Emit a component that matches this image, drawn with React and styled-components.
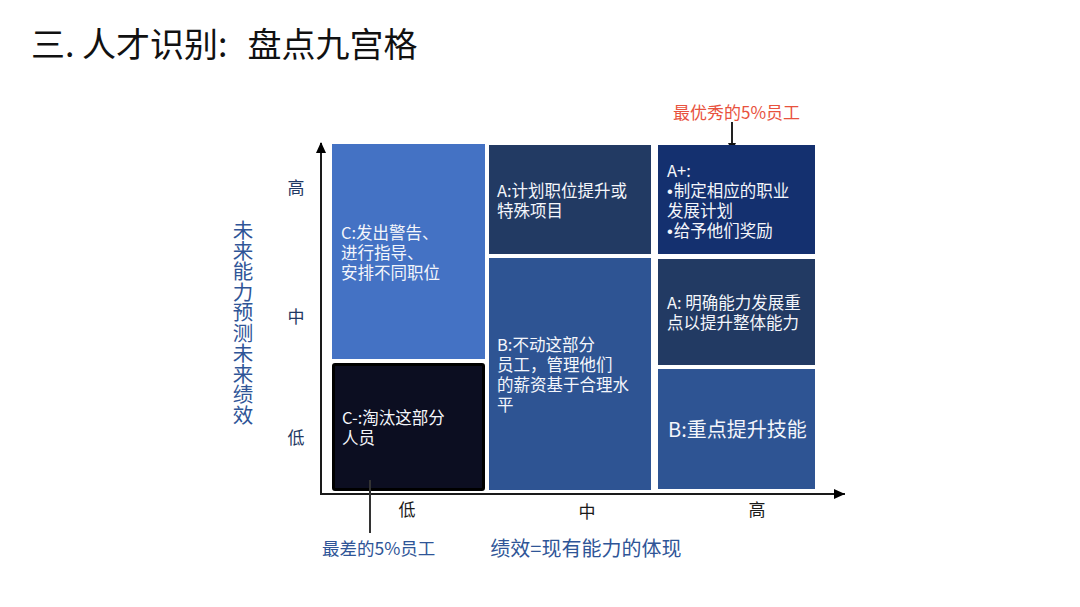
import styled, { createGlobalStyle } from "styled-components";

const GlobalStyle = createGlobalStyle`
  html, body {
    margin: 0;
    padding: 0;
    background: #fff;
  }
`;

const Slide = styled.div`
  width: 1080px;
  height: 607px;
  background: #fff;
  overflow: hidden;
  font-family: "Noto Sans CJK SC", "Noto Sans", sans-serif;
`;

const Title = styled.h1`
  margin: 0;
  padding: 23px 0 0 31px;
  font-size: 34px;
  line-height: 40px;
  font-weight: 400;
  color: #111;
`;

const Colon = styled.span`
  margin-right: 20px;
`;

const NoteRow = styled.div`
  position: relative;
  margin-top: 37px;
  padding-left: 673px;
  height: 24px;
  font-size: 17px;
  line-height: 24px;
  color: #e8523e;
`;

const DownArrow = styled.svg`
  position: absolute;
  left: 54px;
  top: 22px;
  margin-left: 673px;
`;

const ChartArea = styled.div`
  display: flex;
  align-items: flex-start;
  margin-top: 19px;
  padding-left: 232px;
`;

const YTitle = styled.div`
  writing-mode: vertical-rl;
  width: 22px;
  margin-top: 77px;
  font-size: 20.5px;
  line-height: 22px;
  color: #2f5597;
`;

const YTicks = styled.div`
  display: flex;
  flex-direction: column;
  width: 20px;
  margin-left: 32px;
`;

const YTick = styled.span`
  margin-top: ${p => p.$top}px;
  font-size: 17px;
  line-height: 20px;
  text-align: center;
  color: #1f3864;
`;

const PlotColumn = styled.div`
  position: relative;
  display: flex;
  flex-direction: column;
  margin-left: 14px;
`;

const Plot = styled.div`
  position: relative;
  box-sizing: border-box;
  width: 525px;
  height: 352px;
  padding: 1px 0 2px 10px;
  border-left: 2px solid #1a1a1a;
  border-bottom: 2px solid #1a1a1a;

  &::before {
    content: "";
    position: absolute;
    left: -6px;
    top: -1px;
    border-left: 5px solid transparent;
    border-right: 5px solid transparent;
    border-bottom: 11px solid #000;
  }

  &::after {
    content: "";
    position: absolute;
    right: 0;
    bottom: -6px;
    border-top: 5px solid transparent;
    border-bottom: 5px solid transparent;
    border-left: 11px solid #000;
  }
`;

const Grid = styled.div`
  display: flex;
  align-items: flex-start;
`;

const Column = styled.div`
  display: flex;
  flex-direction: column;
  width: ${p => p.$w}px;
  margin-left: ${p => p.$ml || 0}px;
  padding-top: ${p => p.$pt || 0}px;
  gap: ${p => p.$gap}px;
`;

const Cell = styled.div`
  box-sizing: border-box;
  display: flex;
  flex-direction: column;
  justify-content: center;
  height: ${p => p.$h}px;
  margin-top: ${p => p.$mt || 0}px;
  padding: 0 4px 0 ${p => p.$pl || 9}px;
  background: ${p => p.$bg};
  border: ${p => (p.$dark ? "3px solid #000" : "none")};
  border-radius: ${p => (p.$dark ? "3px" : "0")};
  color: #f4f6fb;
  font-size: ${p => p.$fs || 16.5}px;
  line-height: 20px;
  white-space: nowrap;
`;

const Line = styled.span`
  display: block;
  height: 20px;
`;

const Bullet = styled.span`
  font-family: "Liberation Sans", Arial, sans-serif;
  margin-right: 1px;
`;

const Pointer = styled.div`
  position: absolute;
  left: 49px;
  top: 337px;
  width: 2px;
  height: 53px;
  background: #333;
`;

const XTicks = styled.div`
  display: flex;
  margin-top: 4px;
`;

const XTick = styled.span`
  width: ${p => p.$w}px;
  padding-top: ${p => p.$dy || 0}px;
  text-align: center;
  font-size: 17px;
  line-height: 20px;
  color: #1a1a1a;
`;

const BottomNotes = styled.div`
  display: flex;
  align-items: center;
  margin-top: 15px;
  height: 24px;
  color: #2f5597;
`;

const Note = styled.span`
  margin-left: ${p => p.$ml}px;
  font-size: ${p => p.$fs}px;
  line-height: 24px;
`;

const columns = [
  {
    w: 153,
    gap: 4,
    cells: [
      { h: 215, bg: "#4472c4", lines: ["C:发出警告、", "进行指导、", "安排不同职位"] },
      { h: 128, bg: "#0c0e21", dark: true, pl: 7, lines: ["C-:淘汰这部分", "人员"] },
    ],
  },
  {
    w: 162,
    ml: 4,
    pt: 1,
    gap: 4,
    cells: [
      { h: 109, bg: "#223a63", pl: 8, lines: ["A:计划职位提升或", "特殊项目"] },
      {
        h: 232,
        bg: "#2e5493",
        pl: 8,
        lines: ["B:不动这部分", "员工，管理他们", "的薪资基于合理水", "平"],
      },
    ],
  },
  {
    w: 157,
    ml: 7,
    pt: 1,
    gap: 0,
    cells: [
      {
        h: 109,
        bg: "#14306f",
        lines: ["A+:", "•制定相应的职业", "发展计划", "•给予他们奖励"],
      },
      { h: 106, mt: 5, bg: "#223a63", lines: ["A: 明确能力发展重", "点以提升整体能力"] },
      { h: 120, mt: 4, bg: "#2e5493", pl: 10, fs: 20, lines: ["B:重点提升技能"] },
    ],
  },
];

function CellLine({ text }) {
  if (text.startsWith("•")) {
    return (
      <Line>
        <Bullet>•</Bullet>
        {text.slice(1)}
      </Line>
    );
  }
  return <Line>{text}</Line>;
}

export default function App() {
  return (
    <>
      <GlobalStyle />
      <Slide>
        <Title>
          三. 人才识别<Colon>:</Colon>盘点九宫格
        </Title>

        <NoteRow>
          最优秀的5%员工
          <DownArrow width="10" height="30" viewBox="0 0 10 30">
            <line x1="5" y1="0" x2="5" y2="22" stroke="#222" strokeWidth="2" />
            <path d="M1 21 L9 21 L5 29 Z" fill="#111" />
          </DownArrow>
        </NoteRow>

        <ChartArea>
          <YTitle>未来能力预测未来绩效</YTitle>
          <YTicks>
            <YTick $top={34}>高</YTick>
            <YTick $top={109}>中</YTick>
            <YTick $top={101}>低</YTick>
          </YTicks>

          <PlotColumn>
            <Plot>
              <Grid>
                {columns.map((col, i) => (
                  <Column key={i} $w={col.w} $ml={col.ml} $pt={col.pt} $gap={col.gap}>
                    {col.cells.map((c, j) => (
                      <Cell
                        key={j}
                        $h={c.h}
                        $mt={c.mt}
                        $bg={c.bg}
                        $dark={c.dark}
                        $pl={c.pl}
                        $fs={c.fs}
                      >
                        {c.lines.map(l => (
                          <CellLine key={l} text={l} />
                        ))}
                      </Cell>
                    ))}
                  </Column>
                ))}
              </Grid>
            </Plot>
            <Pointer />

            <XTicks>
              <XTick $w={174}>低</XTick>
              <XTick $w={186} $dy={2}>中</XTick>
              <XTick $w={154}>高</XTick>
            </XTicks>

            <BottomNotes>
              <Note $ml={2} $fs={17.5}>最差的5%员工</Note>
              <Note $ml={55} $fs={20}>绩效=现有能力的体现</Note>
            </BottomNotes>
          </PlotColumn>
        </ChartArea>
      </Slide>
    </>
  );
}
